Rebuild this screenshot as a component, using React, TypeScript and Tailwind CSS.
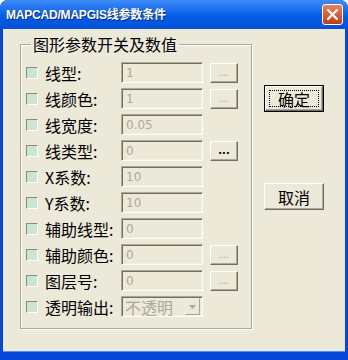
type Row = {
  label: string;
  value: string;
  btn?: "off" | "on";
  select?: boolean;
};

const rows: Row[] = [
  { label: "线型:", value: "1", btn: "off" },
  { label: "线颜色:", value: "1", btn: "off" },
  { label: "线宽度:", value: "0.05" },
  { label: "线类型:", value: "0", btn: "on" },
  { label: "X系数:", value: "10" },
  { label: "Y系数:", value: "10" },
  { label: "辅助线型:", value: "0" },
  { label: "辅助颜色:", value: "0", btn: "off" },
  { label: "图层号:", value: "0", btn: "off" },
  { label: "透明输出:", value: "不透明", select: true },
];

function CheckBox() {
  return (
    <span className="w-[12px] h-[12px] shrink-0 border border-t-[#8a887c] border-l-[#8a887c] border-r-white border-b-white bg-[#c9e6d3]" />
  );
}

function Field({ row }: { row: Row }) {
  if (row.select) {
    return (
      <div className="w-[82px] h-[21px] flex items-center border border-t-[#aca899] border-l-[#aca899] border-r-white border-b-white shadow-[inset_1px_1px_0_#716f64,inset_-1px_-1px_0_#f1efe2]">
        <span className="flex-1 pl-[3px] text-[16px] leading-[18px] text-[#aca899] font-['Noto_Sans_CJK_SC',sans-serif]">
          {row.value}
        </span>
        <span className="w-[15px] h-[17px] mr-[2px] flex items-center justify-center border border-t-[#f1efe2] border-l-[#f1efe2] border-r-[#aca899] border-b-[#aca899]">
          <svg width="7" height="4" viewBox="0 0 7 4">
            <path d="M0 0h7L3.5 4z" fill="#aca899" />
          </svg>
        </span>
      </div>
    );
  }
  return (
    <div className="w-[82px] h-[21px] flex items-center pl-[4px] border border-t-[#aca899] border-l-[#aca899] border-r-white border-b-white shadow-[inset_1px_1px_0_#716f64,inset_-1px_-1px_0_#f1efe2] text-[12px] text-[#aca899] font-['DejaVu_Sans',sans-serif]">
      {row.value}
    </div>
  );
}

function DotButton({ on }: { on: boolean }) {
  return (
    <div
      className={`w-[28px] h-[20px] ml-[7px] flex items-end justify-center pb-[4px] border border-t-white border-l-white border-r-[#716f64] border-b-[#716f64] shadow-[inset_-1px_-1px_0_#aca899] text-[10px] leading-[10px] font-['DejaVu_Sans',sans-serif] ${
        on ? "text-black font-bold" : "text-[#aca899]"
      }`}
    >
      ...
    </div>
  );
}

function DialogButton({ label, focused }: { label: string; focused?: boolean }) {
  return (
    <div
      className={`w-[60px] h-[27px] flex items-center justify-center ${
        focused ? "border border-black" : ""
      }`}
    >
      <div className="w-full h-full flex items-center justify-center border border-t-white border-l-white border-r-[#716f64] border-b-[#716f64] shadow-[inset_-1px_-1px_0_#aca899] p-[3px]">
        <div
          className={`w-full h-full flex items-center justify-center text-[16px] leading-[18px] text-black ${
            focused ? "border border-dotted border-black" : ""
          }`}
        >
          {label}
        </div>
      </div>
    </div>
  );
}

export default function App() {
  return (
    <div className="w-[348px] h-[360px] flex flex-col bg-[#0846d8] rounded-t-[8px] overflow-hidden font-['Noto_Sans_CJK_SC',sans-serif]">
      <div className="h-[29px] shrink-0 flex items-center justify-between pl-[6px] pr-[5px] bg-linear-to-b from-[#3d8cf7] via-[#0660e8] to-[#0250d8]">
        <span className="text-[12px] font-bold text-white tracking-[-0.2px] [text-shadow:1px_1px_0_#0a2a7a] font-['Liberation_Sans','Noto_Sans_CJK_SC',sans-serif]">
          MAPCAD/MAPGIS线参数条件
        </span>
        <div className="w-[21px] h-[21px] flex items-center justify-center rounded-[3px] border border-white bg-linear-to-b from-[#e8835c] to-[#c4380f]">
          <svg width="11" height="11" viewBox="0 0 11 11">
            <path d="M1 1L10 10M10 1L1 10" stroke="white" strokeWidth="2.2" strokeLinecap="square" />
          </svg>
        </div>
      </div>

      <div className="flex-1 mx-[3px] mb-[9px] bg-[#ece9d8] flex items-start pl-[17px] pt-[6px] shadow-[0_1px_0_#5a8ff0]">
        <fieldset className="w-[232px] border border-[#aca899] shadow-[1px_1px_0_white,inset_1px_1px_0_white] px-[5px] pt-[9px] pb-[11px]">
          <legend className="ml-[5px] px-[2px] text-[16px] leading-[18px] text-black">
            图形参数开关及数值
          </legend>
          <div className="flex flex-col gap-[5px]">
            {rows.map((row) => (
              <div key={row.label} className="h-[21px] flex items-center">
                <CheckBox />
                <span className="w-[83px] pl-[7px] text-[16px] leading-[18px] text-black whitespace-nowrap">
                  {row.label}
                </span>
                <Field row={row} />
                {row.btn && <DotButton on={row.btn === "on"} />}
              </div>
            ))}
          </div>
        </fieldset>

        <div className="ml-[12px] pt-[50px] flex flex-col gap-[71px]">
          <DialogButton label="确定" focused />
          <DialogButton label="取消" />
        </div>
      </div>
    </div>
  );
}
